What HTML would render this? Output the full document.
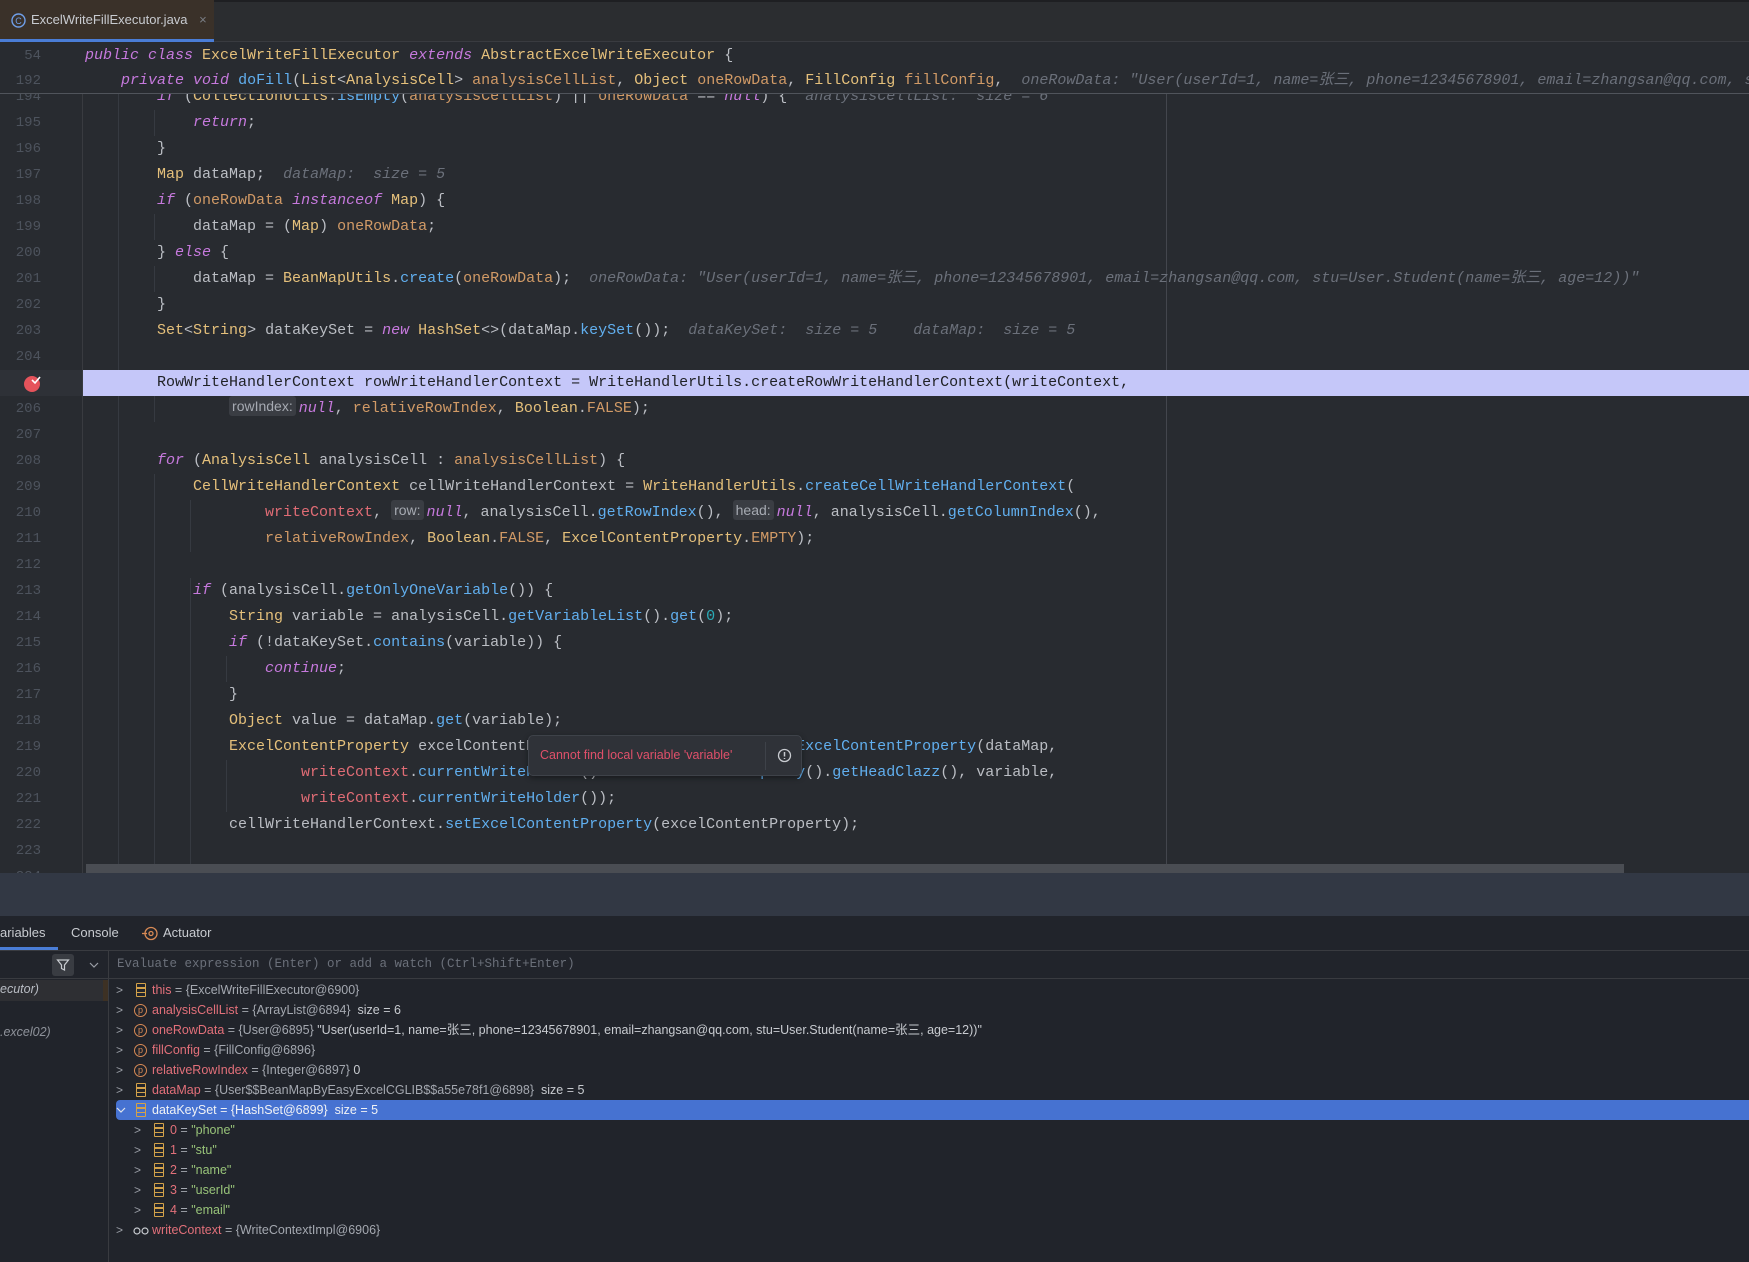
<!DOCTYPE html>
<html><head><meta charset="utf-8">
<style>
*{margin:0;padding:0;box-sizing:border-box}
body{width:1749px;height:1262px;overflow:hidden;background:#21242b;position:relative;font-family:"Liberation Sans","Noto Sans CJK SC",sans-serif}
.abs{position:absolute}
#tabbar{left:0;top:0;width:1749px;height:42px;background:#2b2d30;border-top:2px solid #1e1f22;border-bottom:1px solid #393b40}
#tab{left:0;top:0;width:214px;height:42px;background:#3a3129;border-bottom:3px solid #4a7dd6;color:#c8cbd0;font-size:13px;line-height:40px;padding-left:31px}
#editor{left:0;top:42px;width:1749px;height:831px;background:#282b30;overflow:hidden}
.ln{position:absolute;left:0;width:41px;text-align:right;color:#4d535d;font:14px/26px "Liberation Mono",monospace}
.code{position:absolute;left:85px;white-space:pre;font:15px/26px "Liberation Mono","Noto Sans CJK SC",monospace;color:#bbbec4}
.k{color:#c679dd;font-style:italic}
.c{color:#e5c07b}
.f{color:#61afef}
.fd{color:#e06c75}
.p{color:#d19a66}
.n{color:#2aacb8}
.h{color:#6b707a;font-style:italic}
.hb{display:inline-block;background:#3a3d43;color:#a6aab2;font:14px/20px "Liberation Sans",sans-serif;padding:0 3px;border-radius:3px;margin-right:3px;vertical-align:1px}
.g{position:absolute;width:1px;background:#363a41}
#hl .code span{color:#202226 !important}
.vrow{position:absolute;height:20px;font-size:12.5px;line-height:20px;color:#a4a8b0;white-space:pre}
.vn{color:#e2707a}
.vs{color:#98c379}
.arr{position:absolute;color:#9a9ea6;font-size:12px}
.bars{position:absolute;width:10px;height:14px;border:1.5px solid #d3a24a;border-radius:1px}
.bars:before,.bars:after{content:"";position:absolute;left:0;right:0;height:1.5px;background:#d3a24a}
.bars:before{top:3px}.bars:after{top:7.5px}
.pi{position:absolute;width:13px;height:13px;border:1.5px solid #d88a55;border-radius:50%;color:#d88a55;font-size:9px;line-height:10px;text-align:center}
</style></head><body>
<div id="tabbar" class="abs"></div>
<div id="tab" class="abs"><svg class="abs" style="left:11px;top:13px" width="15" height="15"><circle cx="7.5" cy="7.5" r="6.5" fill="none" stroke="#6f9ee8" stroke-width="1.4"/><text x="7.5" y="11" text-anchor="middle" font-size="9" fill="#6f9ee8" font-family="Liberation Sans">C</text></svg>ExcelWriteFillExecutor.java <span style="color:#7a7e85;margin-left:8px">×</span></div>

<div id="editor" class="abs">
 <div class="g" style="left:82px;top:52px;height:780px;background:#393b40"></div>
 <div class="g" style="left:1166px;top:52px;height:780px;background:#43464d"></div>
 <div class="g" style="left:118px;top:52px;height:780px"></div>
 <div class="g" style="left:154px;top:68px;height:26px"></div>
 <div class="g" style="left:154px;top:172px;height:26px"></div>
 <div class="g" style="left:154px;top:224px;height:26px"></div>
 <div class="g" style="left:154px;top:354px;height:26px"></div>
 <div class="g" style="left:154px;top:432px;height:400px"></div>
 <div class="g" style="left:190px;top:458px;height:52px"></div>
 <div class="g" style="left:190px;top:536px;height:300px"></div>
 <div class="g" style="left:226px;top:614px;height:26px"></div>
 <div class="g" style="left:226px;top:718px;height:52px"></div>

 <div id="lines">
 <div class="ln" style="top:42px">194</div><div class="code" style="top:42px">        <span class="k">if</span> (<span class="c">CollectionUtils</span>.<span class="f">isEmpty</span>(<span class="p">analysisCellList</span>) || <span class="p">oneRowData</span> == <span class="k">null</span>) {  <span class="h">analysisCellList:  size = 6</span></div>
 <div class="ln" style="top:68px">195</div><div class="code" style="top:68px">            <span class="k">return</span>;</div>
 <div class="ln" style="top:94px">196</div><div class="code" style="top:94px">        }</div>
 <div class="ln" style="top:120px">197</div><div class="code" style="top:120px">        <span class="c">Map</span> dataMap;  <span class="h">dataMap:  size = 5</span></div>
 <div class="ln" style="top:146px">198</div><div class="code" style="top:146px">        <span class="k">if</span> (<span class="p">oneRowData</span> <span class="k">instanceof</span> <span class="c">Map</span>) {</div>
 <div class="ln" style="top:172px">199</div><div class="code" style="top:172px">            dataMap = (<span class="c">Map</span>) <span class="p">oneRowData</span>;</div>
 <div class="ln" style="top:198px">200</div><div class="code" style="top:198px">        } <span class="k">else</span> {</div>
 <div class="ln" style="top:224px">201</div><div class="code" style="top:224px">            dataMap = <span class="c">BeanMapUtils</span>.<span class="f">create</span>(<span class="p">oneRowData</span>);  <span class="h">oneRowData: "User(userId=1, name=张三, phone=12345678901, email=zhangsan@qq.com, stu=User.Student(name=张三, age=12))"</span></div>
 <div class="ln" style="top:250px">202</div><div class="code" style="top:250px">        }</div>
 <div class="ln" style="top:276px">203</div><div class="code" style="top:276px">        <span class="c">Set</span>&lt;<span class="c">String</span>&gt; dataKeySet = <span class="k">new</span> <span class="c">HashSet</span>&lt;&gt;(dataMap.<span class="f">keySet</span>());  <span class="h">dataKeySet:  size = 5    dataMap:  size = 5</span></div>
 <div class="ln" style="top:302px">204</div>
 <div id="hl"><div class="abs" style="left:83px;top:328px;width:1666px;height:26px;background:#c5c7f9"></div><div class="abs" style="left:0;top:328px;width:82px;height:26px;background:#2e3137"></div>
 <div class="code" style="top:328px;color:#202226">        RowWriteHandlerContext rowWriteHandlerContext = WriteHandlerUtils.createRowWriteHandlerContext(writeContext,</div></div>
 <svg class="abs" style="left:23px;top:332px" width="20" height="20"><circle cx="9" cy="10" r="8" fill="#e5535b"/><path d="M9 6l3 3 5-6" stroke="#fff" stroke-width="1.6" fill="none"/></svg>
 <div class="ln" style="top:354px">206</div><div class="code" style="top:354px">                <span class="hb">rowIndex:</span><span class="k">null</span>, <span class="p">relativeRowIndex</span>, <span class="c">Boolean</span>.<span class="p">FALSE</span>);</div>
 <div class="ln" style="top:380px">207</div>
 <div class="ln" style="top:406px">208</div><div class="code" style="top:406px">        <span class="k">for</span> (<span class="c">AnalysisCell</span> analysisCell : <span class="p">analysisCellList</span>) {</div>
 <div class="ln" style="top:432px">209</div><div class="code" style="top:432px">            <span class="c">CellWriteHandlerContext</span> cellWriteHandlerContext = <span class="c">WriteHandlerUtils</span>.<span class="f">createCellWriteHandlerContext</span>(</div>
 <div class="ln" style="top:458px">210</div><div class="code" style="top:458px">                    <span class="fd">writeContext</span>, <span class="hb">row:</span><span class="k">null</span>, analysisCell.<span class="f">getRowIndex</span>(), <span class="hb">head:</span><span class="k">null</span>, analysisCell.<span class="f">getColumnIndex</span>(),</div>
 <div class="ln" style="top:484px">211</div><div class="code" style="top:484px">                    <span class="p">relativeRowIndex</span>, <span class="c">Boolean</span>.<span class="p">FALSE</span>, <span class="c">ExcelContentProperty</span>.<span class="p">EMPTY</span>);</div>
 <div class="ln" style="top:510px">212</div>
 <div class="ln" style="top:536px">213</div><div class="code" style="top:536px">            <span class="k">if</span> (analysisCell.<span class="f">getOnlyOneVariable</span>()) {</div>
 <div class="ln" style="top:562px">214</div><div class="code" style="top:562px">                <span class="c">String</span> variable = analysisCell.<span class="f">getVariableList</span>().<span class="f">get</span>(<span class="n">0</span>);</div>
 <div class="ln" style="top:588px">215</div><div class="code" style="top:588px">                <span class="k">if</span> (!dataKeySet.<span class="f">contains</span>(variable)) {</div>
 <div class="ln" style="top:614px">216</div><div class="code" style="top:614px">                    <span class="k">continue</span>;</div>
 <div class="ln" style="top:640px">217</div><div class="code" style="top:640px">                }</div>
 <div class="ln" style="top:666px">218</div><div class="code" style="top:666px">                <span class="c">Object</span> value = dataMap.<span class="f">get</span>(variable);</div>
 <div class="ln" style="top:692px">219</div><div class="code" style="top:692px">                <span class="c">ExcelContentProperty</span> excelContentProperty = <span class="c">ClassUtils</span>.<span class="f">declaredExcelContentProperty</span>(dataMap,</div>
 <div class="ln" style="top:718px">220</div><div class="code" style="top:718px">                        <span class="fd">writeContext</span>.<span class="f">currentWriteHolder</span>().<span class="f">excelWriteHeadProperty</span>().<span class="f">getHeadClazz</span>(), variable,</div>
 <div class="ln" style="top:744px">221</div><div class="code" style="top:744px">                        <span class="fd">writeContext</span>.<span class="f">currentWriteHolder</span>());</div>
 <div class="ln" style="top:770px">222</div><div class="code" style="top:770px">                cellWriteHandlerContext.<span class="f">setExcelContentProperty</span>(excelContentProperty);</div>
 <div class="ln" style="top:796px">223</div>
 <div class="ln" style="top:822px">224</div><div class="code" style="top:822px">                <span class="f">doFill</span>(analysisCell, <span class="p">fillConfig</span>, cellWriteHandlerContext, rowWriteHandlerContext);</div>
 </div>

 <div class="abs" style="left:528px;top:693px;width:274px;height:41px;background:#2f3238;border:1px solid #3e4249;border-radius:5px;box-shadow:0 2px 6px rgba(0,0,0,.4)">
  <span class="abs" style="left:11px;top:12px;color:#e0506a;font-size:12.5px">Cannot find local variable 'variable'</span>
  <div class="abs" style="left:236px;top:6px;width:1px;height:28px;background:#3e4249"></div>
  <svg class="abs" style="left:248px;top:12px" width="15" height="15"><circle cx="7.5" cy="7.5" r="6" fill="none" stroke="#c8cbd0" stroke-width="1.3"/><path d="M7.5 4v4.5M7.5 10v1" stroke="#c8cbd0" stroke-width="1.5"/></svg>
 </div>

 <div class="abs" style="left:0;top:0;width:1749px;height:52px;background:#282b30;border-bottom:1px solid #50545b"></div>
 <div class="ln" style="top:1px">54</div><div class="code" style="top:1px"><span class="k">public class</span> <span class="c">ExcelWriteFillExecutor</span> <span class="k">extends</span> <span class="c">AbstractExcelWriteExecutor</span> {</div>
 <div class="ln" style="top:26px">192</div><div class="code" style="top:26px">    <span class="k">private void</span> <span class="f">doFill</span>(<span class="c">List</span>&lt;<span class="c">AnalysisCell</span>&gt; <span class="p">analysisCellList</span>, <span class="c">Object</span> <span class="p">oneRowData</span>, <span class="c">FillConfig</span> <span class="p">fillConfig</span>,  <span class="h">oneRowData: "User(userId=1, name=张三, phone=12345678901, email=zhangsan@qq.com, stu=User.Student(name=张三, age=12))"</span></div>

 <div class="abs" style="left:86px;top:822px;width:1538px;height:9px;background:#4a4d53"></div>
</div>

<div class="abs" style="left:0;top:873px;width:1749px;height:43px;background:#323844"></div>

<div class="abs" style="left:0;top:916px;width:1749px;height:35px;border-bottom:1px solid #393b40"></div>
<div class="abs" style="left:0;top:925px;color:#c8cbd0;font-size:13px">ariables</div>
<div class="abs" style="left:0;top:947px;width:58px;height:3px;background:#4a7dd6"></div>
<div class="abs" style="left:71px;top:925px;color:#c8cbd0;font-size:13px">Console</div>
<svg class="abs" style="left:141px;top:925px" width="18" height="17"><circle cx="10" cy="8.5" r="6" fill="none" stroke="#d88a55" stroke-width="1.3"/><circle cx="10" cy="8.5" r="2" fill="none" stroke="#d88a55" stroke-width="1.3"/><path d="M1 8.5h5" stroke="#d88a55" stroke-width="1.3"/></svg>
<div class="abs" style="left:163px;top:925px;color:#c8cbd0;font-size:13px">Actuator</div>

<div class="abs" style="left:0;top:951px;width:1749px;height:28px;border-bottom:1px solid #393b40"></div>
<div class="abs" style="left:108px;top:951px;width:1px;height:311px;background:#393b40"></div>
<div class="abs" style="left:52px;top:954px;width:22px;height:22px;background:#393c42;border-radius:3px"></div>
<svg class="abs" style="left:56px;top:958px" width="14" height="14"><path d="M1.5 2h11l-4 5v5l-3-1.5V7z" fill="none" stroke="#c8cbd0" stroke-width="1.2"/></svg>
<svg class="abs" style="left:89px;top:961px" width="10" height="8"><path d="M1 2l4 4 4-4" fill="none" stroke="#9a9ea6" stroke-width="1.2"/></svg>
<div class="abs" style="left:117px;top:957px;color:#6b707a;font:12.5px 'Liberation Mono',monospace">Evaluate expression (Enter) or add a watch (Ctrl+Shift+Enter)</div>

<div class="abs" style="left:0;top:980px;width:108px;height:21px;background:#2e2f33"></div>
<div class="abs" style="left:103px;top:980px;width:5px;height:21px;background:#3d3124"></div>
<div class="abs" style="left:0;top:982px;color:#b8bcc3;font-size:12.5px;font-style:italic">ecutor)</div>
<div class="abs" style="left:0;top:1025px;color:#8e929a;font-size:12.5px;font-style:italic">.excel02)</div>

<div class="abs" style="left:116px;top:1100px;width:1633px;height:20px;background:#4672d1;border-radius:4px 0 0 4px"></div>
<span class="arr" style="left:116px;top:983px">&gt;</span><div class="bars" style="left:136px;top:983px"></div><div class="vrow" style="left:152px;top:980px"><span class="vn">this</span> = {ExcelWriteFillExecutor@6900}</div>
<span class="arr" style="left:116px;top:1003px">&gt;</span><div class="pi" style="left:134px;top:1004px">p</div><div class="vrow" style="left:152px;top:1000px"><span class="vn">analysisCellList</span> = {ArrayList@6894}  <span style="color:#c8cbd0">size = 6</span></div>
<span class="arr" style="left:116px;top:1023px">&gt;</span><div class="pi" style="left:134px;top:1024px">p</div><div class="vrow" style="left:152px;top:1020px"><span class="vn">oneRowData</span> = {User@6895} <span style="color:#c8cbd0">"User(userId=1, name=张三, phone=12345678901, email=zhangsan@qq.com, stu=User.Student(name=张三, age=12))"</span></div>
<span class="arr" style="left:116px;top:1043px">&gt;</span><div class="pi" style="left:134px;top:1044px">p</div><div class="vrow" style="left:152px;top:1040px"><span class="vn">fillConfig</span> = {FillConfig@6896}</div>
<span class="arr" style="left:116px;top:1063px">&gt;</span><div class="pi" style="left:134px;top:1064px">p</div><div class="vrow" style="left:152px;top:1060px"><span class="vn">relativeRowIndex</span> = {Integer@6897} <span style="color:#c8cbd0">0</span></div>
<span class="arr" style="left:116px;top:1083px">&gt;</span><div class="bars" style="left:136px;top:1083px"></div><div class="vrow" style="left:152px;top:1080px"><span class="vn">dataMap</span> = {User$$BeanMapByEasyExcelCGLIB$$a55e78f1@6898}  <span style="color:#c8cbd0">size = 5</span></div>
<svg class="abs" style="left:116px;top:1106px" width="10" height="8"><path d="M1 2l4 4 4-4" fill="none" stroke="#dfe3ea" stroke-width="1.2"/></svg><div class="bars" style="left:136px;top:1103px"></div><div class="vrow" style="left:152px;top:1100px;color:#f0f2f5">dataKeySet = {HashSet@6899}  size = 5</div>
<span class="arr" style="left:134px;top:1123px">&gt;</span><div class="bars" style="left:154px;top:1123px"></div><div class="vrow" style="left:170px;top:1120px"><span class="vn">0</span> = <span class="vs">"phone"</span></div>
<span class="arr" style="left:134px;top:1143px">&gt;</span><div class="bars" style="left:154px;top:1143px"></div><div class="vrow" style="left:170px;top:1140px"><span class="vn">1</span> = <span class="vs">"stu"</span></div>
<span class="arr" style="left:134px;top:1163px">&gt;</span><div class="bars" style="left:154px;top:1163px"></div><div class="vrow" style="left:170px;top:1160px"><span class="vn">2</span> = <span class="vs">"name"</span></div>
<span class="arr" style="left:134px;top:1183px">&gt;</span><div class="bars" style="left:154px;top:1183px"></div><div class="vrow" style="left:170px;top:1180px"><span class="vn">3</span> = <span class="vs">"userId"</span></div>
<span class="arr" style="left:134px;top:1203px">&gt;</span><div class="bars" style="left:154px;top:1203px"></div><div class="vrow" style="left:170px;top:1200px"><span class="vn">4</span> = <span class="vs">"email"</span></div>
<span class="arr" style="left:116px;top:1223px">&gt;</span><svg class="abs" style="left:133px;top:1226px" width="16" height="10"><circle cx="4" cy="5" r="3" fill="none" stroke="#c8cbd0" stroke-width="1.2"/><circle cx="12" cy="5" r="3" fill="none" stroke="#c8cbd0" stroke-width="1.2"/></svg><div class="vrow" style="left:152px;top:1220px"><span class="vn">writeContext</span> = {WriteContextImpl@6906}</div>
</body></html>
